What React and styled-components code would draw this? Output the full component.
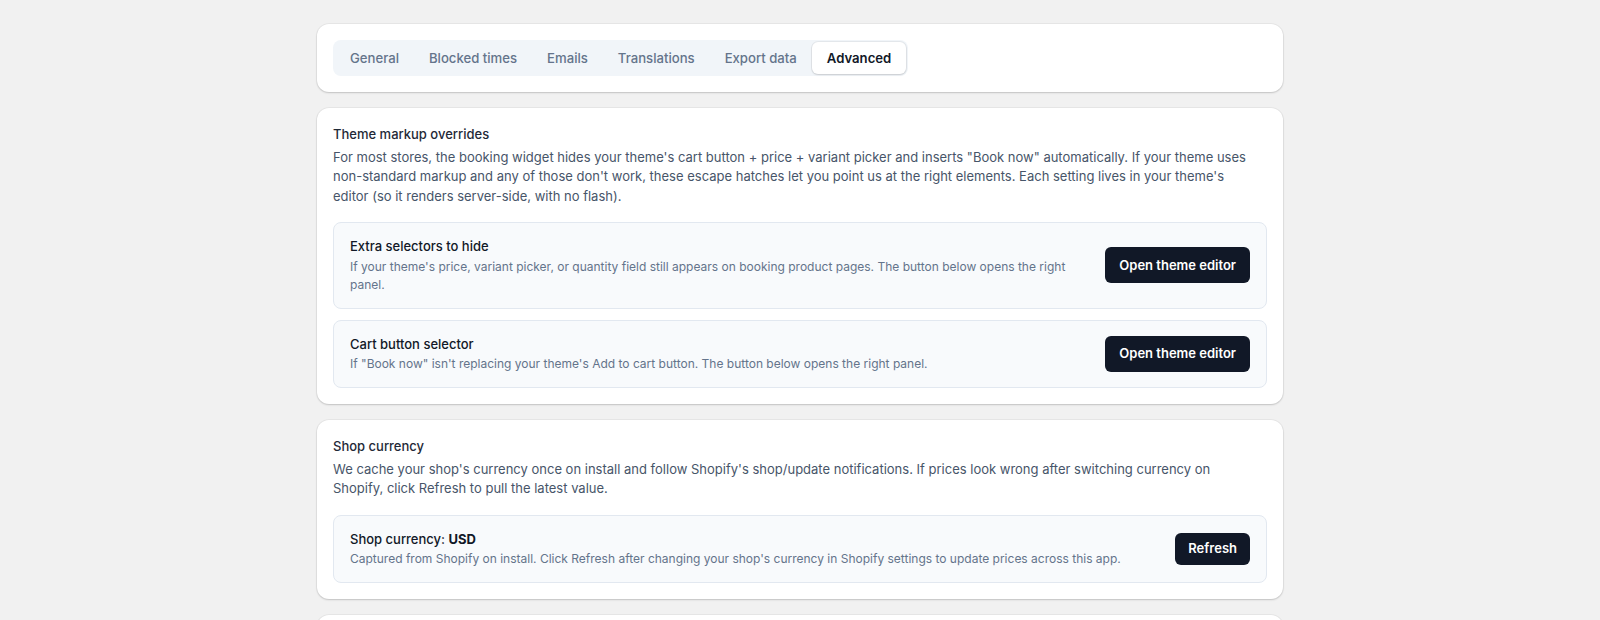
import React, { useState } from 'react';
import styled, { createGlobalStyle } from 'styled-components';

const GlobalStyle = createGlobalStyle`
  * { box-sizing: border-box; }
  body {
    margin: 0;
    background: #f1f1f1;
    font-family: Inter, "Noto Sans", sans-serif;
    color: #1f2937;
    -webkit-font-smoothing: antialiased;
  }
`;

const tabs = ['General', 'Blocked times', 'Emails', 'Translations', 'Export data', 'Advanced'];

const App = () => {
  const [active, setActive] = useState('Advanced');

  return (
    <>
      <GlobalStyle />
      <Page>
        <Card>
          <TabBar>
            {tabs.map((t) => (
              <Tab key={t} active={t === active} onClick={() => setActive(t)}>
                {t}
              </Tab>
            ))}
          </TabBar>
        </Card>

        <Card>
          <Title>Theme markup overrides</Title>
          <Description>
            For most stores, the booking widget hides your theme's cart button + price + variant
            picker and inserts "Book now" automatically. If your theme uses non-standard markup and
            any of those don't work, these escape hatches let you point us at the right elements.
            Each setting lives in your theme's editor (so it renders server-side, with no flash).
          </Description>
          <Stack>
            <SettingRow>
              <SettingText>
                <SettingTitle>Extra selectors to hide</SettingTitle>
                <SettingHint>
                  If your theme's price, variant picker, or quantity field still appears on booking
                  product pages. The button below opens the right panel.
                </SettingHint>
              </SettingText>
              <DarkButton>Open theme editor</DarkButton>
            </SettingRow>
            <SettingRow>
              <SettingText>
                <SettingTitle>Cart button selector</SettingTitle>
                <SettingHint>
                  If "Book now" isn't replacing your theme's Add to cart button. The button below
                  opens the right panel.
                </SettingHint>
              </SettingText>
              <DarkButton>Open theme editor</DarkButton>
            </SettingRow>
          </Stack>
        </Card>

        <Card>
          <Title>Shop currency</Title>
          <Description>
            We cache your shop's currency once on install and follow Shopify's shop/update
            notifications. If prices look wrong after switching currency on Shopify, click Refresh
            to pull the latest value.
          </Description>
          <Stack>
            <SettingRow>
              <SettingText>
                <SettingTitle>
                  Shop currency: <strong>USD</strong>
                </SettingTitle>
                <SettingHint>
                  Captured from Shopify on install. Click Refresh after changing your shop's
                  currency in Shopify settings to update prices across this app.
                </SettingHint>
              </SettingText>
              <DarkButton small>Refresh</DarkButton>
            </SettingRow>
          </Stack>
        </Card>

        {/* next card only peeks in at the bottom of the view */}
        <Card tall />
      </Page>
    </>
  );
};

const Page = styled.div`
  max-width: 966px;
  margin: 0 auto;
  padding: 24px 0;
  display: flex;
  flex-direction: column;
  gap: 16px;
`;

const Card = styled.section`
  background: #ffffff;
  border-radius: 12px;
  padding: 17px 16px 16px;
  min-height: ${(p) => (p.tall ? '120px' : '0')};
  box-shadow: 0 0 0 1px rgba(0, 0, 0, 0.04), 0 1px 2px rgba(0, 0, 0, 0.16);
`;

const TabBar = styled.div`
  display: inline-flex;
  align-items: center;
  margin-top: -1px;
  padding: 2px;
  background: #f1f5f9;
  border-radius: 8px;
`;

const Tab = styled.button`
  border: none;
  font-family: inherit;
  font-size: 13.15px;
  line-height: 19px;
  padding: 6.5px 15px;
  border-radius: 6px;
  cursor: pointer;
  color: ${(p) => (p.active ? '#111827' : '#64748b')};
  background: ${(p) => (p.active ? '#ffffff' : 'transparent')};
  font-weight: ${(p) => (p.active ? 600 : 500)};
  box-shadow: ${(p) =>
    p.active ? '0 0 0 1px rgba(0,0,0,0.05), 0 1px 2px rgba(0,0,0,0.12)' : 'none'};
`;

const Title = styled.h2`
  margin: 0;
  font-size: 13px;
  font-weight: 500;
  line-height: 19.5px;
  color: #1f2937;
`;

const Description = styled.p`
  margin: 3px 0 0;
  padding-right: 6px;
  font-size: 13px;
  line-height: 19.5px;
  color: #475569;
`;

const Stack = styled.div`
  margin-top: 16px;
  display: flex;
  flex-direction: column;
  gap: 11px;
`;

const SettingRow = styled.div`
  display: flex;
  align-items: center;
  gap: 24px;
  padding: 14px 16px;
  background: #f8fafc;
  border: 1px solid #e2e8f0;
  border-radius: 8px;
`;

const SettingText = styled.div`
  flex: 1;
  min-width: 0;
`;

const SettingTitle = styled.div`
  font-size: 13px;
  font-weight: 500;
  line-height: 19.5px;
  color: #111827;

  strong {
    font-weight: 700;
  }
`;

const SettingHint = styled.div`
  margin-top: 1px;
  font-size: 12px;
  line-height: 18px;
  color: #64748b;
`;

const DarkButton = styled.button`
  flex-shrink: 0;
  border: none;
  background: #111827;
  color: #ffffff;
  font-family: inherit;
  font-size: 13px;
  font-weight: 600;
  line-height: 19px;
  padding: ${(p) => (p.small ? '6.5px 13px' : '8.5px 14px')};
  border-radius: 6px;
  cursor: pointer;
`;

export default App;
